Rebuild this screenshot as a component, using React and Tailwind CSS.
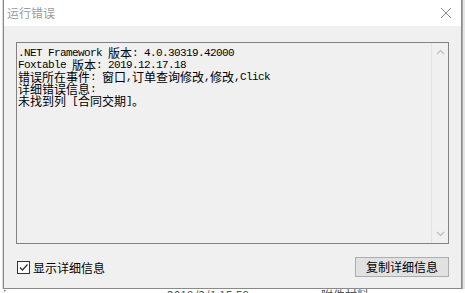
import React from 'react';

const cjkRe = /([\u3000-\u303f\u3400-\u9fff\uff00-\uffef]+)/;

const MixedLine = ({ text }) => (
  <div className="h-[12px] whitespace-pre flex items-start">
    {text.split(cjkRe).filter(Boolean).map((part, i) =>
      cjkRe.test(part) ? (
        <span key={i} className="inline-block h-[12px] leading-[12px] text-[12px] tracking-normal" style={{ fontFamily: '"Noto Sans CJK SC", sans-serif' }}>
          {part}
        </span>
      ) : (
        <span key={i} className="inline-block h-[12px] leading-[12px] text-[11px] tracking-[-0.6px]" style={{ fontFamily: '"Liberation Mono", monospace' }}>
          {part}
        </span>
      )
    )}
  </div>
);

const lines = [
  '.NET Framework 版本: 4.0.30319.42000',
  'Foxtable 版本: 2019.12.17.18',
  '错误所在事件: 窗口,订单查询修改,修改,Click',
  '详细错误信息:',
  '未找到列 [合同交期]。',
];

const App = () => {
  return (
    <div
      className="w-[465px] h-[293px] overflow-hidden bg-white relative"
      style={{ fontFamily: '"Noto Sans CJK SC", sans-serif' }}
    >
      <div className="flex h-[289px]">
        {/* sliver of the app behind */}
        <div className="w-[3px] bg-white border-r border-[#d9d9d9]" />
        <div className="w-[459px] flex flex-col border-l border-r border-b border-[#8a8a8a]">
          {/* title bar */}
          <div className="h-[26px] bg-white flex items-center justify-between pl-[3px] pr-[6px]">
            <span className="text-[12px] text-[#9b9b9b] leading-none">运行错误</span>
            <svg width="14" height="14" viewBox="0 0 14 14" className="mr-[2px]">
              <path d="M2 2 L12 12 M12 2 L2 12" stroke="#8f8f8f" strokeWidth="1" fill="none" />
            </svg>
          </div>
          {/* body */}
          <div className="flex-1 bg-[#f0f0f0] pl-[12px] pt-[16px]">
            <div className="w-[433px] h-[202px] border border-[#828282] flex">
              <div className="flex-1 pl-[1px] pt-[4px] text-black">
                {lines.map((l, i) => (
                  <MixedLine key={i} text={l} />
                ))}
              </div>
              <div className="w-[17px] border-l border-[#e3e3e3] flex flex-col justify-between items-center py-[6px]">
                <svg width="9" height="6" viewBox="0 0 9 6">
                  <path d="M1 5 L4.5 1.5 L8 5" stroke="#c2c2c2" strokeWidth="1.4" fill="none" />
                </svg>
                <svg width="9" height="6" viewBox="0 0 9 6">
                  <path d="M1 1 L4.5 4.5 L8 1" stroke="#c2c2c2" strokeWidth="1.4" fill="none" />
                </svg>
              </div>
            </div>
            <div className="flex items-center justify-between w-[433px] mt-[13px]">
              <label className="flex items-center gap-[3px] ml-[1px] mt-[1px]">
                <span className="w-[13px] h-[13px] border border-[#333] bg-white flex items-center justify-center">
                  <svg width="11" height="11" viewBox="0 0 11 11">
                    <path d="M2 5.5 L4.5 8 L9.5 2.5" stroke="#333" strokeWidth="1.3" fill="none" />
                  </svg>
                </span>
                <span className="text-[12px] text-black leading-none">显示详细信息</span>
              </label>
              <button className="w-[94px] h-[20px] bg-[#e1e1e1] border border-[#adadad] text-[12px] text-black leading-none flex items-center justify-center">
                复制详细信息
              </button>
            </div>
          </div>
        </div>
        <div className="flex-1 bg-[#e6e6e6] border-l border-[#a9a9a9]" />
      </div>
      {/* app behind, bottom strip */}
      <div className="flex h-[4px] overflow-hidden text-[12px] text-[#555] leading-[12px]">
        <span className="ml-[3px] w-[30px]">ism</span>
        <span className="ml-[134px] w-[120px]">2019/3/1 15:58</span>
        <span className="ml-[34px]">附件材料</span>
      </div>
    </div>
  );
};

export default App;
